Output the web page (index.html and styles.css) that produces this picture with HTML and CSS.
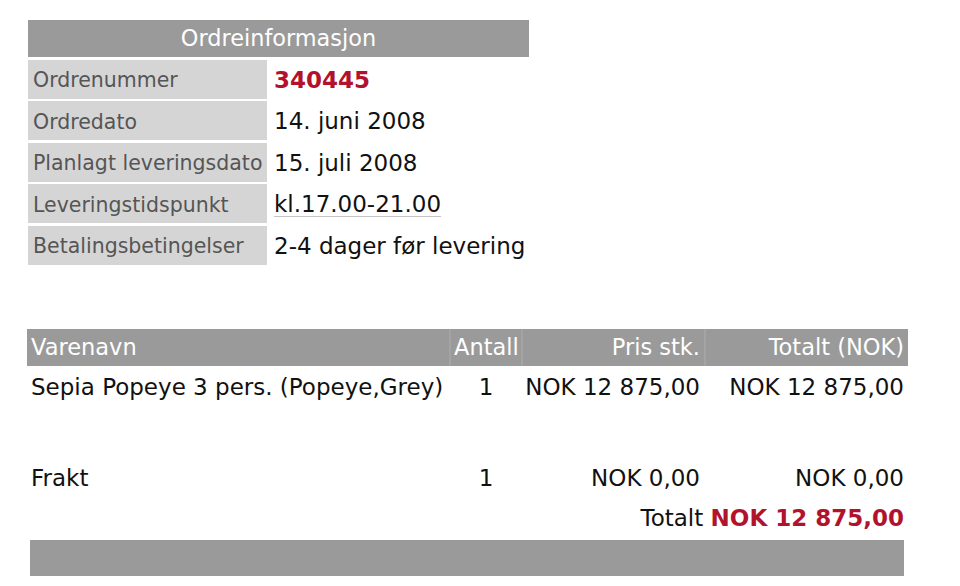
FILE: index.html
```html
<!DOCTYPE html>
<html lang="no">
<head>
<meta charset="utf-8">
<title>Ordreinformasjon</title>
<link rel="stylesheet" href="styles.css">
</head>
<body>
<div class="page">
  <section class="info">
    <div class="info-head">Ordreinformasjon</div>
    <div class="info-row"><div class="label">Ordrenummer</div><div class="value order-no">340445</div></div>
    <div class="info-row"><div class="label">Ordredato</div><div class="value">14. juni 2008</div></div>
    <div class="info-row"><div class="label">Planlagt leveringsdato</div><div class="value">15. juli 2008</div></div>
    <div class="info-row"><div class="label">Leveringstidspunkt</div><div class="value"><span class="abbr">kl.17.00-21.00</span></div></div>
    <div class="info-row"><div class="label">Betalingsbetingelser</div><div class="value">2-4 dager før levering</div></div>
  </section>

  <section class="items">
    <div class="items-head">
      <div class="h name">Varenavn</div>
      <div class="h qty">Antall</div>
      <div class="h price">Pris stk.</div>
      <div class="h total">Totalt (NOK)</div>
    </div>
    <div class="item-row">
      <div class="c name">Sepia Popeye 3 pers. (Popeye,Grey)</div>
      <div class="c qty">1</div>
      <div class="c price">NOK 12 875,00</div>
      <div class="c total">NOK 12 875,00</div>
    </div>
    <div class="spacer"></div>
    <div class="item-row">
      <div class="c name">Frakt</div>
      <div class="c qty">1</div>
      <div class="c price">NOK 0,00</div>
      <div class="c total">NOK 0,00</div>
    </div>
    <div class="sum-row">Totalt <strong class="sum">NOK 12 875,00</strong></div>
    <div class="foot-bar"></div>
  </section>
</div>
</body>
</html>
```

FILE: styles.css
```css
html, body {
  margin: 0;
  padding: 0;
  background: #ffffff;
}

body {
  font-family: "DejaVu Sans", Verdana, sans-serif;
  font-size: 23px;
  color: #111111;
}

.page {
  padding: 20px 0 0 0;
}

/* ---------- Order info table ---------- */
.info {
  width: 501px;
  margin-left: 28px;
  display: flex;
  flex-direction: column;
  gap: 2.6px;
}

.info-head {
  height: 37px;
  line-height: 37px;
  background: #9a9a9a;
  color: #ffffff;
  text-align: center;
  font-size: 22.4px;
}

.info-row {
  display: flex;
  height: 39px;
  align-items: stretch;
}

.label {
  width: 239px;
  background: #d5d5d5;
  color: #555555;
  font-size: 20.5px;
  padding: 2px 0 0 5px;
  box-sizing: border-box;
  display: flex;
  align-items: center;
  white-space: nowrap;
}

.value {
  flex: 1;
  padding: 1px 0 0 7px;
  font-size: 23px;
  display: flex;
  align-items: center;
  white-space: nowrap;
}

.order-no {
  color: #b3122d;
  font-weight: bold;
  font-size: 23px;
}

.abbr {
  text-decoration: underline;
  text-decoration-color: #c4c4c4;
  text-underline-offset: 4px;
  text-decoration-thickness: 1px;
}

/* ---------- Items table ---------- */
.items {
  margin-left: 27px;
  width: 881px;
  margin-top: 64px;
}

.items-head,
.item-row {
  display: grid;
  grid-template-columns: 422px 70px 181px 1fr;
  column-gap: 2px;
}

.items-head {
  height: 37px;
  background: #a4a4a4;
}

.h {
  background: #9a9a9a;
  color: #ffffff;
  font-size: 22.5px;
  line-height: 37px;
  white-space: nowrap;
}

.item-row {
  height: 41px;
  align-items: center;
  font-size: 23px;
  padding-top: 1px;
  box-sizing: border-box;
}

.c {
  white-space: nowrap;
}

.name { padding-left: 4px; }
.qty { text-align: center; }
.h.qty { text-align: left; padding-left: 3px; }
.price, .total { text-align: right; padding-right: 4px; }

.spacer {
  height: 50px;
}

.sum-row {
  height: 40px;
  line-height: 40px;
  text-align: right;
  padding-right: 4px;
}

.sum {
  color: #b3122d;
}

.foot-bar {
  margin: 2px 4px 0 3px;
  height: 36px;
  background: #9a9a9a;
}
```
